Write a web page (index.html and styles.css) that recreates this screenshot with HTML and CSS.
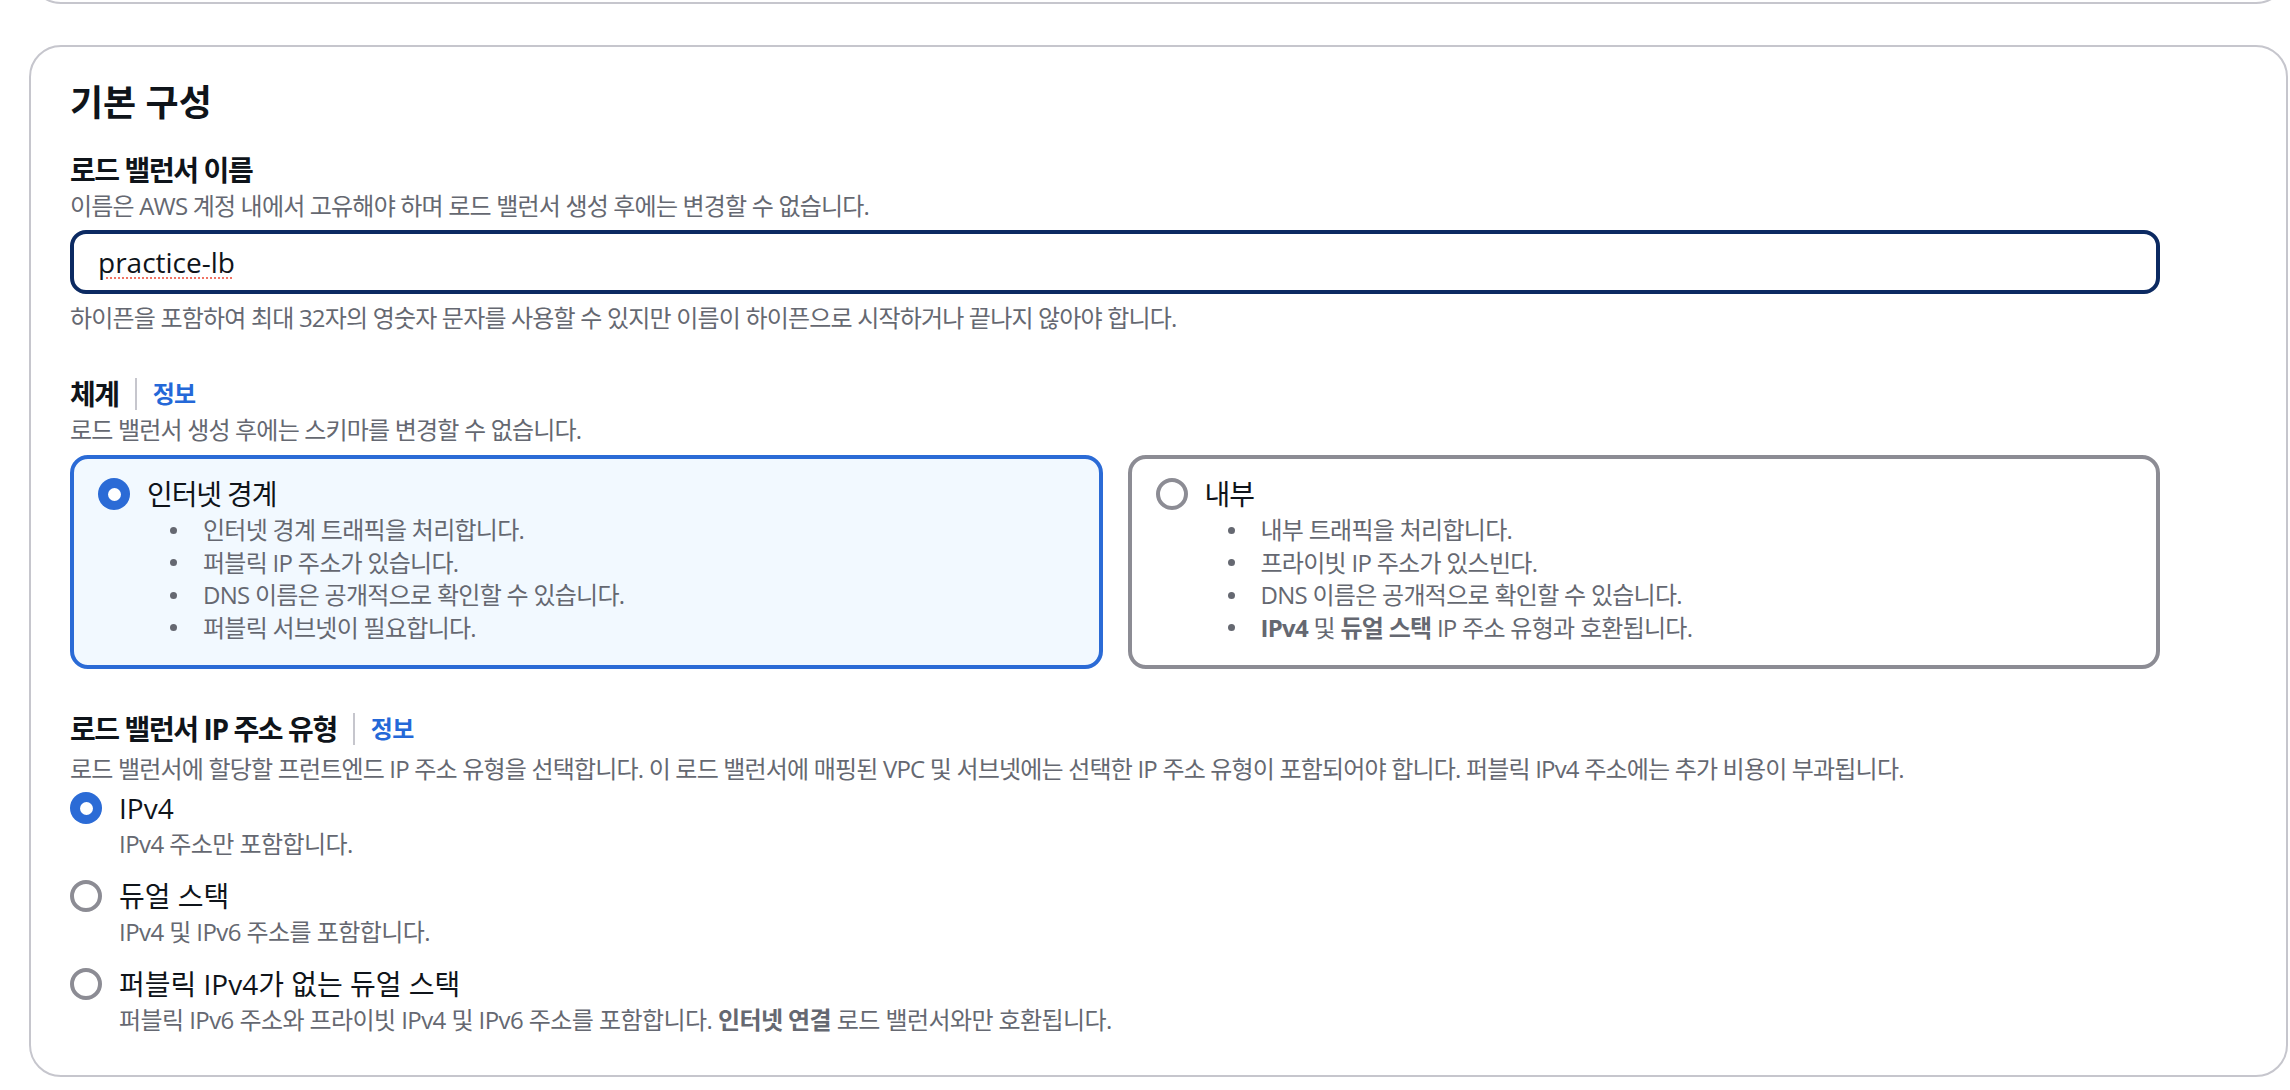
FILE: index.html
```html
<!DOCTYPE html>
<html lang="ko">
<head>
<meta charset="utf-8">
<title>기본 구성</title>
<link rel="stylesheet" href="styles.css">
</head>
<body>
<div class="page">
  <div class="card card-prev"></div>
  <section class="card">
    <h2 class="card-title">기본 구성</h2>
    <div class="content">
      <div class="field">
        <div class="label">로드 밸런서 이름</div>
        <div class="desc">이름은 AWS 계정 내에서 고유해야 하며 로드 밸런서 생성 후에는 변경할 수 없습니다.</div>
        <div class="input" role="textbox"><span class="spell">practice-lb</span></div>
        <div class="constraint">하이픈을 포함하여 최대 32자의 영숫자 문자를 사용할 수 있지만 이름이 하이픈으로 시작하거나 끝나지 않아야 합니다.</div>
      </div>

      <div class="field">
        <div class="label-row">
          <span class="label">체계</span>
          <span class="divider"></span>
          <span class="info">정보</span>
        </div>
        <div class="desc">로드 밸런서 생성 후에는 스키마를 변경할 수 없습니다.</div>
        <div class="tiles">
          <div class="tile selected">
            <div class="tile-head">
              <span class="radio checked"></span>
              <span class="tile-label">인터넷 경계</span>
            </div>
            <ul class="bullets">
              <li>인터넷 경계 트래픽을 처리합니다.</li>
              <li>퍼블릭 IP 주소가 있습니다.</li>
              <li>DNS 이름은 공개적으로 확인할 수 있습니다.</li>
              <li>퍼블릭 서브넷이 필요합니다.</li>
            </ul>
          </div>
          <div class="tile">
            <div class="tile-head">
              <span class="radio"></span>
              <span class="tile-label">내부</span>
            </div>
            <ul class="bullets">
              <li>내부 트래픽을 처리합니다.</li>
              <li>프라이빗 IP 주소가 있스빈다.</li>
              <li>DNS 이름은 공개적으로 확인할 수 있습니다.</li>
              <li><span><b>IPv4</b> 및 <b>듀얼 스택</b> IP 주소 유형과 호환됩니다.</span></li>
            </ul>
          </div>
        </div>
      </div>

      <div class="field">
        <div class="label-row">
          <span class="label">로드 밸런서 IP 주소 유형</span>
          <span class="divider"></span>
          <span class="info">정보</span>
        </div>
        <div class="desc desc-ip">로드 밸런서에 할당할 프런트엔드 IP 주소 유형을 선택합니다. 이 로드 밸런서에 매핑된 VPC 및 서브넷에는 선택한 IP 주소 유형이 포함되어야 합니다. 퍼블릭 IPv4 주소에는 추가 비용이 부과됩니다.</div>
        <div class="radio-group">
          <div class="radio-item">
            <span class="radio checked"></span>
            <span class="radio-label">IPv4</span>
            <span class="radio-desc">IPv4 주소만 포함합니다.</span>
          </div>
          <div class="radio-item">
            <span class="radio"></span>
            <span class="radio-label">듀얼 스택</span>
            <span class="radio-desc">IPv4 및 IPv6 주소를 포함합니다.</span>
          </div>
          <div class="radio-item">
            <span class="radio"></span>
            <span class="radio-label">퍼블릭 IPv4가 없는 듀얼 스택</span>
            <span class="radio-desc">퍼블릭 IPv6 주소와 프라이빗 IPv4 및 IPv6 주소를 포함합니다. <b>인터넷 연결</b> 로드 밸런서와만 호환됩니다.</span>
          </div>
        </div>
      </div>
    </div>
  </section>
</div>
</body>
</html>
```

FILE: styles.css
```css
* { box-sizing: border-box; }

html, body {
  margin: 0;
  padding: 0;
  background: #ffffff;
}

body {
  font-family: "Open Sans", "Noto Sans CJK KR", sans-serif;
  color: #0f141a;
  width: 2290px;
  height: 1090px;
  overflow: hidden;
}

.page {
  display: flex;
  flex-direction: column;
  padding: 0 2px 0 29px;
}

.card {
  border: 2px solid #c6c6cd;
  border-radius: 32px;
  background: #ffffff;
}

.card-prev {
  height: 64px;
  margin-top: -60px;
  margin-bottom: 41px;
}

.card:not(.card-prev) {
  padding: 34px 40px 39px 39px;
}

.card-title {
  margin: 0 0 25px 0;
  font-size: 36px;
  line-height: 44px;
  font-weight: 700;
  color: #0f141a;
}

.content {
  max-width: 2090px;
  display: flex;
  flex-direction: column;
  gap: 40px;
}

.field {
  display: flex;
  flex-direction: column;
}

.label {
  font-size: 28px;
  line-height: 40px;
  font-weight: 700;
  letter-spacing: -0.05em;
  color: #0f141a;
}

.label-row {
  display: flex;
  align-items: center;
}

.divider {
  width: 2px;
  height: 32px;
  background: #c6c6cd;
  margin: 0 16px 0 16px;
}

.info {
  font-size: 24px;
  line-height: 40px;
  font-weight: 700;
  letter-spacing: -0.03em;
  color: #2468d8;
}

.desc, .constraint {
  font-size: 24px;
  line-height: 32px;
  letter-spacing: -0.034em;
  color: #656871;
}

.desc-ip {
  margin-top: 4px;
}

.input {
  margin-top: 8px;
  height: 64px;
  border: 4px solid #0c2a62;
  border-radius: 16px;
  padding: 0 24px;
  font-size: 28px;
  line-height: 56px;
  color: #0f141a;
}

.spell {
  text-decoration: underline dotted #f07464;
  text-decoration-thickness: 2px;
  text-underline-offset: 4px;
}

.constraint {
  margin-top: 8px;
}

.tiles {
  margin-top: 9px;
  display: grid;
  grid-template-columns: 1fr 1fr;
  gap: 25px;
}

.tile {
  border: 4px solid #8c8c94;
  border-radius: 18px;
  padding: 15px 24px 21px 24px;
  background: #ffffff;
}

.tile.selected {
  border-color: #2b6bd6;
  background: #f2f9ff;
}

.tile-head {
  display: flex;
  align-items: center;
  gap: 17px;
}

.tile-label {
  font-size: 28px;
  line-height: 40px;
  letter-spacing: -0.04em;
}

.radio {
  flex: none;
  width: 32px;
  height: 32px;
  border-radius: 50%;
  border: 4px solid #8c8c94;
  background: #ffffff;
  display: flex;
  align-items: center;
  justify-content: center;
}

.radio.checked {
  border: none;
  background: #2b6bd6;
}

.radio.checked::after {
  content: "";
  width: 13px;
  height: 13px;
  border-radius: 50%;
  background: #ffffff;
}

.bullets {
  list-style: none;
  margin: 0;
  padding: 0 0 0 72px;
  font-size: 24px;
  line-height: 32.5px;
  letter-spacing: -0.03em;
  color: #656871;
}

.bullets li {
  display: flex;
  align-items: center;
}

.bullets li::before {
  content: "";
  flex: none;
  width: 7px;
  height: 7px;
  border-radius: 50%;
  background: #656871;
  margin-right: 26px;
}

.bullets b, .radio-desc b {
  font-weight: 700;
}

.radio-group {
  margin-top: 3px;
  display: flex;
  flex-direction: column;
  gap: 16px;
}

.radio-item {
  display: grid;
  grid-template-columns: 32px 1fr;
  column-gap: 17px;
  align-items: center;
}

.radio-label {
  font-size: 28px;
  line-height: 40px;
  color: #0f141a;
}

.radio-desc {
  grid-column: 2;
  font-size: 24px;
  line-height: 32px;
  letter-spacing: -0.024em;
  color: #656871;
}
```
